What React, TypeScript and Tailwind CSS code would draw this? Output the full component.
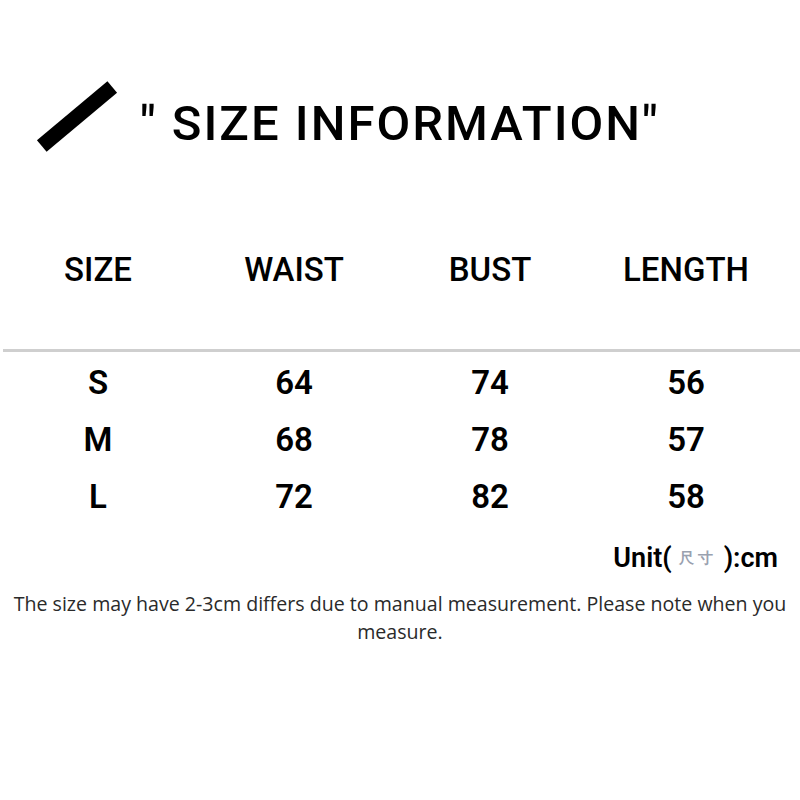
import React from 'react';

const columns = ['SIZE', 'WAIST', 'BUST', 'LENGTH'];

const rows = [
    ['S', '64', '74', '56'],
    ['M', '68', '78', '57'],
    ['L', '72', '82', '58'],
];

export default function App() {
    return (
        <div className="w-[800px] h-[800px] bg-white text-black overflow-hidden font-['Roboto',sans-serif]">
            {/* title */}
            <div className="flex items-center pt-[100px] pl-[31px]">
                <div className="w-[92px] h-[15px] bg-black -rotate-[40deg] -translate-y-[8px]" />
                <h1 className="ml-[17px] text-[49px] leading-[48px] font-medium tracking-[2px] whitespace-nowrap">
                    " SIZE INFORMATION"
                </h1>
            </div>

            {/* table head */}
            <div className="grid grid-cols-4 w-[784px] mt-[102px]">
                {columns.map((c) => (
                    <div key={c} className="text-center text-[33px] leading-[40px] font-medium">
                        {c}
                    </div>
                ))}
            </div>
            <div className="ml-[3px] mt-[59px] h-[3px] bg-[#cfcfcf]" />

            {/* table body */}
            <div className="mt-[2px]">
                {rows.map((r) => (
                    <div key={r[0]} className="grid grid-cols-4 w-[784px] h-[57px] items-center">
                        {r.map((v, i) => (
                            <div key={i} className="text-center text-[33px] leading-[40px] font-semibold">
                                {v}
                            </div>
                        ))}
                    </div>
                ))}
            </div>

            <div className="flex justify-end items-center pr-[22px] mt-[17px] text-[27px] leading-[32px] font-semibold">
                Unit(<span className="text-[15px] text-gray-400 mx-[7px] tracking-[4px]">尺寸</span>):cm
            </div>

            <p className="mt-[16px] px-[4px] text-center text-[19.6px] leading-[28px] font-['Open_Sans',sans-serif] text-[#2a2a2a]">
                The size may have 2-3cm differs due to manual measurement. Please note when you measure.
            </p>
        </div>
    );
}
